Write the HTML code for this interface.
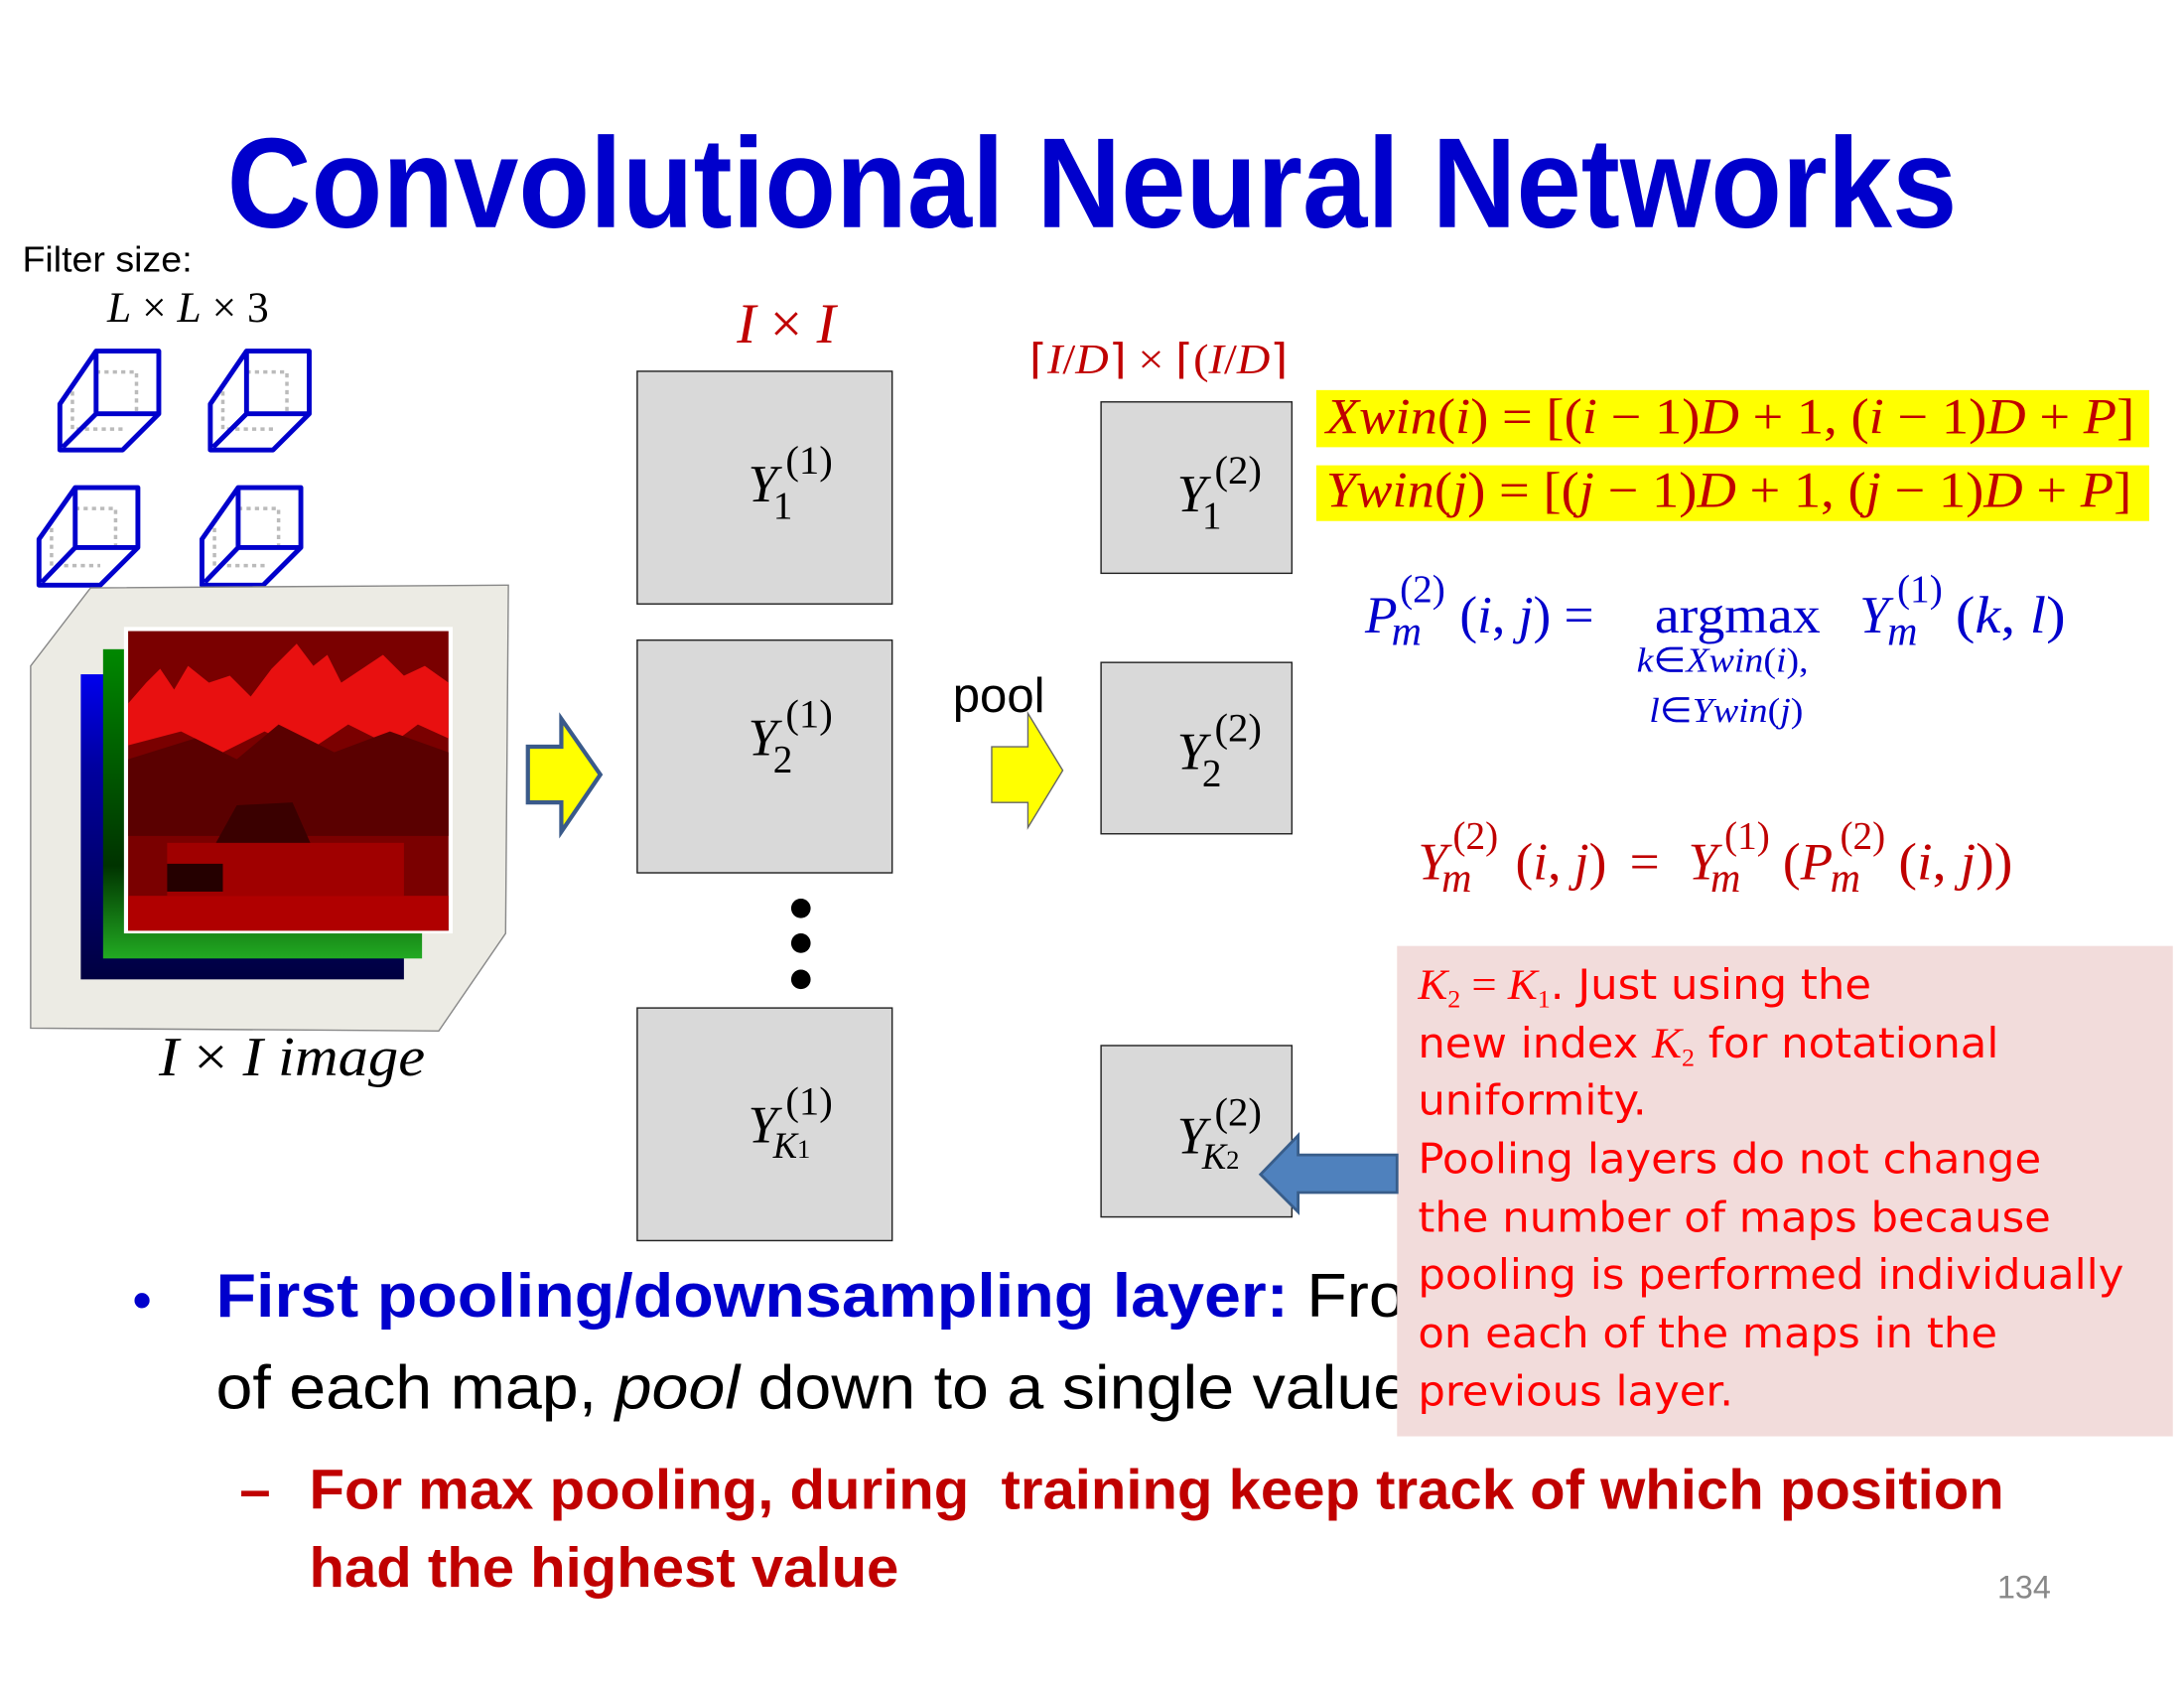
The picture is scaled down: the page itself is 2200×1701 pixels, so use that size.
<!DOCTYPE html>
<html><head><meta charset="utf-8"><style>
html,body{margin:0;padding:0;background:#fff;width:2200px;height:1700px;overflow:hidden}
#s{position:absolute;left:0;top:0;width:1568px;height:1212px;transform:scale(1.40306);transform-origin:0 0}
.a{position:absolute;white-space:nowrap;transform-origin:0 0}
.sans{font-family:"Liberation Sans",sans-serif}
.box{position:absolute;background:#d9d9d9;border:1.5px solid #222;box-sizing:border-box}
.m{font-family:"Liberation Serif",serif}
.m i{font-style:italic}
.pl{height:41.9px;line-height:41.9px}
.pl .m{font-size:31px}
.pl sub{font-size:18px;line-height:0;vertical-align:-6px;font-style:normal}
</style></head><body><div id="s">

<div class="a sans" style="left:163px;top:80px;font-size:92px;font-weight:bold;color:#0000cc;transform:scaleX(0.91)">Convolutional Neural Networks</div>

<div class="a sans" style="left:16px;top:171px;font-size:26px;color:#000;transform:scaleX(1.03)">Filter size:</div>
<div class="a m" style="left:77px;top:203px;font-size:31px"><i>L</i> × <i>L</i> × 3</div>

<svg class="a" style="left:0;top:240px" width="240" height="190" viewBox="0 240 240 190">
<g fill="none" stroke="#bbb" stroke-width="2.5" stroke-dasharray="3 3">
<path d="M69,267H98V297 M52,281V308H88"/><path d="M177,267H206V297 M160,281V308H196"/>
<path d="M54,365H83V393 M37,379V406H72"/><path d="M171,365H200V393 M154,379V406H190"/>
</g>
<g fill="none" stroke="#0000cc" stroke-width="3.5" stroke-linejoin="round">
<path d="M69,252H114V297H69Z M69,252L43,290V323H88L114,297 M69,297L45,321"/>
<path d="M177,252H222V297H177Z M177,252L151,290V323H196L222,297 M177,297L153,321"/>
<path d="M54,350H99V393H54Z M54,350L28,387V420H72L99,393 M54,393L30,418"/>
<path d="M171,350H216V393H171Z M171,350L145,387V420H189L216,393 M171,393L147,418"/>
</g>
</svg>

<svg class="a" style="left:0;top:400px" width="380" height="350" viewBox="0 400 380 350">
<polygon points="22,478 65,422 365,420 363,670 315,740 22,738" fill="#ecebe4" stroke="#888" stroke-width="1"/>
<defs><linearGradient id="bg" x1="0" y1="0" x2="0" y2="1"><stop offset="0" stop-color="#0000ee"/><stop offset="0.3" stop-color="#0000a0"/><stop offset="1" stop-color="#000040"/></linearGradient>
<linearGradient id="gg" x1="0" y1="0" x2="0" y2="1"><stop offset="0" stop-color="#008800"/><stop offset="0.7" stop-color="#003300"/><stop offset="1" stop-color="#22aa22"/></linearGradient></defs>
<rect x="58" y="484" width="232" height="219" fill="url(#bg)"/>
<rect x="74" y="466" width="229" height="222" fill="url(#gg)"/>
<rect x="89" y="450" width="236" height="220" fill="#fff"/>
<rect x="92" y="453" width="230" height="215" fill="#7a0000"/>
<polygon points="92,505 105,490 115,480 125,495 135,478 150,490 165,485 180,500 195,480 213,462 225,478 235,470 245,490 260,480 275,470 290,485 305,478 322,490 322,530 300,520 280,535 250,520 220,540 190,525 160,540 130,525 92,535" fill="#e81010"/>
<polygon points="92,545 140,530 170,545 200,520 240,540 280,525 322,540 322,600 92,600" fill="#5a0000"/>
<polygon points="155,605 170,578 210,576 225,610" fill="#3a0000"/>
<rect x="120" y="605" width="170" height="38" fill="#a00000"/>
<rect x="120" y="620" width="40" height="20" fill="#250000"/>
<rect x="92" y="643" width="230" height="25" fill="#b00000"/>
</svg>

<div class="a m" style="left:114px;top:735px;font-size:40px;transform:scaleX(1.08)"><i>I</i> × <i>I image</i></div>

<svg class="a" style="left:370px;top:505px" width="70" height="100" viewBox="370 505 70 100">
<polygon points="379,536 403,536 403,516 431,556 403,597 403,576 379,576" fill="#ffff00" stroke="#3a5a8a" stroke-width="3"/>
</svg>

<div class="a m" style="left:529px;top:208px;font-size:41px;color:#c00000"><i>I</i> × <i>I</i></div>

<div class="box" style="left:457px;top:266px;width:184px;height:168px"></div>
<div class="box" style="left:457px;top:459px;width:184px;height:168px"></div>
<div class="box" style="left:457px;top:723px;width:184px;height:168px"></div>
<div class="a m" style="left:537px;top:326px;font-size:38px"><i>Y</i></div><div class="a m" style="left:564px;top:315px;font-size:29px">(1)</div><div class="a m" style="left:555px;top:348px;font-size:28px">1</div>
<div class="a m" style="left:537px;top:508px;font-size:38px"><i>Y</i></div><div class="a m" style="left:564px;top:497px;font-size:29px">(1)</div><div class="a m" style="left:555px;top:530px;font-size:28px">2</div>
<div class="a m" style="left:537px;top:786px;font-size:38px"><i>Y</i></div><div class="a m" style="left:564px;top:775px;font-size:29px">(1)</div><div class="a m" style="left:555px;top:808px;font-size:26px"><i>K</i><span style="font-size:19px">1</span></div>

<div class="a" style="left:568px;top:645px;width:14px;height:14px;border-radius:50%;background:#000"></div>
<div class="a" style="left:568px;top:670px;width:14px;height:14px;border-radius:50%;background:#000"></div>
<div class="a" style="left:568px;top:696px;width:14px;height:14px;border-radius:50%;background:#000"></div>

<div class="a sans" style="left:684px;top:480px;font-size:35px">pool</div>
<svg class="a" style="left:705px;top:505px" width="65" height="95" viewBox="705 505 65 95">
<polygon points="712,536 738,536 738,512 763,553 738,594 738,576 712,576" fill="#ffff00" stroke="#666" stroke-width="1"/>
</svg>

<div class="a m" style="left:739px;top:241px;font-size:30px;color:#c00000;transform:scaleX(1.1)">⌈<i>I</i>/<i>D</i>⌉ × ⌈(<i>I</i>/<i>D</i>⌉</div>

<div class="box" style="left:790px;top:288px;width:138px;height:124px"></div>
<div class="box" style="left:790px;top:475px;width:138px;height:124px"></div>
<div class="box" style="left:790px;top:750px;width:138px;height:124px"></div>
<div class="a m" style="left:845px;top:333px;font-size:38px"><i>Y</i></div><div class="a m" style="left:872px;top:322px;font-size:29px">(2)</div><div class="a m" style="left:863px;top:355px;font-size:28px">1</div>
<div class="a m" style="left:845px;top:518px;font-size:38px"><i>Y</i></div><div class="a m" style="left:872px;top:507px;font-size:29px">(2)</div><div class="a m" style="left:863px;top:540px;font-size:28px">2</div>
<div class="a m" style="left:845px;top:794px;font-size:38px"><i>Y</i></div><div class="a m" style="left:872px;top:783px;font-size:29px">(2)</div><div class="a m" style="left:863px;top:816px;font-size:26px"><i>K</i><span style="font-size:19px">2</span></div>

<div class="a" style="left:945px;top:280px;width:598px;height:41px;background:#ffff00"></div>
<div class="a" style="left:945px;top:334px;width:598px;height:40px;background:#ffff00"></div>
<div class="a m" style="left:952px;top:278px;font-size:36px;color:#c00000;transform:scaleX(1.08)"><i>Xwin</i>(<i>i</i>) = [(<i>i</i> − 1)<i>D</i> + 1, (<i>i</i> − 1)<i>D</i> + <i>P</i>]</div>
<div class="a m" style="left:952px;top:331px;font-size:36px;color:#c00000;transform:scaleX(1.08)"><i>Ywin</i>(<i>j</i>) = [(<i>j</i> − 1)<i>D</i> + 1, (<i>j</i> − 1)<i>D</i> + <i>P</i>]</div>

<div style="color:#0000cc">
<div class="a m" style="left:980px;top:420px;font-size:38px"><i>P</i></div>
<div class="a m" style="left:1005px;top:408px;font-size:28px">(2)</div>
<div class="a m" style="left:999px;top:437px;font-size:30px"><i>m</i></div>
<div class="a m" style="left:1048px;top:420px;font-size:38px">(<i>i</i>, <i>j</i>) =</div>
<div class="a m" style="left:1188px;top:420px;font-size:38px;transform:scaleX(1.05)">argmax</div>
<div class="a m" style="left:1335px;top:420px;font-size:38px"><i>Y</i></div>
<div class="a m" style="left:1362px;top:408px;font-size:28px">(1)</div>
<div class="a m" style="left:1355px;top:437px;font-size:30px"><i>m</i></div>
<div class="a m" style="left:1404px;top:420px;font-size:38px;transform:scaleX(1.1)">(<i>k</i>, <i>l</i>)</div>
<div class="a m" style="left:1175px;top:459px;font-size:25px;transform:scaleX(1.08)"><i>k</i>∈<i>Xwin</i>(<i>i</i>),</div>
<div class="a m" style="left:1184px;top:495px;font-size:25px;transform:scaleX(1.08)"><i>l</i>∈<i>Ywin</i>(<i>j</i>)</div>
</div>

<div style="color:#c00000">
<div class="a m" style="left:1018px;top:597px;font-size:38px"><i>Y</i></div>
<div class="a m" style="left:1043px;top:585px;font-size:28px">(2)</div>
<div class="a m" style="left:1035px;top:614px;font-size:30px"><i>m</i></div>
<div class="a m" style="left:1088px;top:597px;font-size:38px">(<i>i</i>, <i>j</i>)</div>
<div class="a m" style="left:1170px;top:597px;font-size:38px">=</div>
<div class="a m" style="left:1212px;top:597px;font-size:38px"><i>Y</i></div>
<div class="a m" style="left:1238px;top:585px;font-size:28px">(1)</div>
<div class="a m" style="left:1228px;top:614px;font-size:30px"><i>m</i></div>
<div class="a m" style="left:1280px;top:597px;font-size:38px">(<i>P</i></div>
<div class="a m" style="left:1321px;top:585px;font-size:28px">(2)</div>
<div class="a m" style="left:1314px;top:614px;font-size:30px"><i>m</i></div>
<div class="a m" style="left:1363px;top:597px;font-size:38px;transform:scaleX(1.05)">(<i>i</i>, <i>j</i>))</div>
</div>

<div class="a sans" style="left:95px;top:912px;font-size:40px;color:#0000cc">•</div>
<div class="a sans" style="left:155px;top:906px;font-size:44px;transform:scaleX(1.075)"><b style="color:#0000cc">First pooling/downsampling layer:</b> From</div>
<div class="a sans" style="left:155px;top:972px;font-size:44px;transform:scaleX(1.075)">of each map, <i>pool</i> down to a single value</div>
<div class="a sans" style="left:172px;top:1048px;font-size:40px;color:#c00000;font-weight:bold">–</div>
<div class="a sans" style="left:222px;top:1048px;font-size:40px;color:#c00000;font-weight:bold;transform:scaleX(1.035)">For max pooling, during&nbsp; training keep track of which position</div>
<div class="a sans" style="left:222px;top:1104px;font-size:40px;color:#c00000;font-weight:bold;transform:scaleX(1.035)">had the highest value</div>
<div class="a sans" style="left:1434px;top:1126px;font-size:23px;color:#888">134</div>

<div class="a" style="left:1003px;top:679px;width:557px;height:352px;background:#f2dcdb"></div>
<div class="a" style="left:1018px;top:686px;font-family:'DejaVu Sans',sans-serif;font-size:30px;color:#ff0000;transform:scaleX(1.03)">
<div class="pl"><span class="m"><i>K</i><sub>2</sub> = <i>K</i><sub>1</sub></span>. Just using the</div>
<div class="pl">new index <span class="m"><i>K</i><sub>2</sub></span> for notational</div>
<div class="pl">uniformity.</div>
<div class="pl">Pooling layers do not change</div>
<div class="pl">the number of maps because</div>
<div class="pl">pooling is performed individually</div>
<div class="pl">on each of the maps in the</div>
<div class="pl">previous layer.</div>
</div>

<svg class="a" style="left:900px;top:810px" width="110" height="70" viewBox="900 810 110 70">
<polygon points="1003,829 932,829 932,815 905,843 932,870 932,856 1003,856" fill="#4f81bd" stroke="#385d8a" stroke-width="2"/>
</svg>

</div></body></html>
